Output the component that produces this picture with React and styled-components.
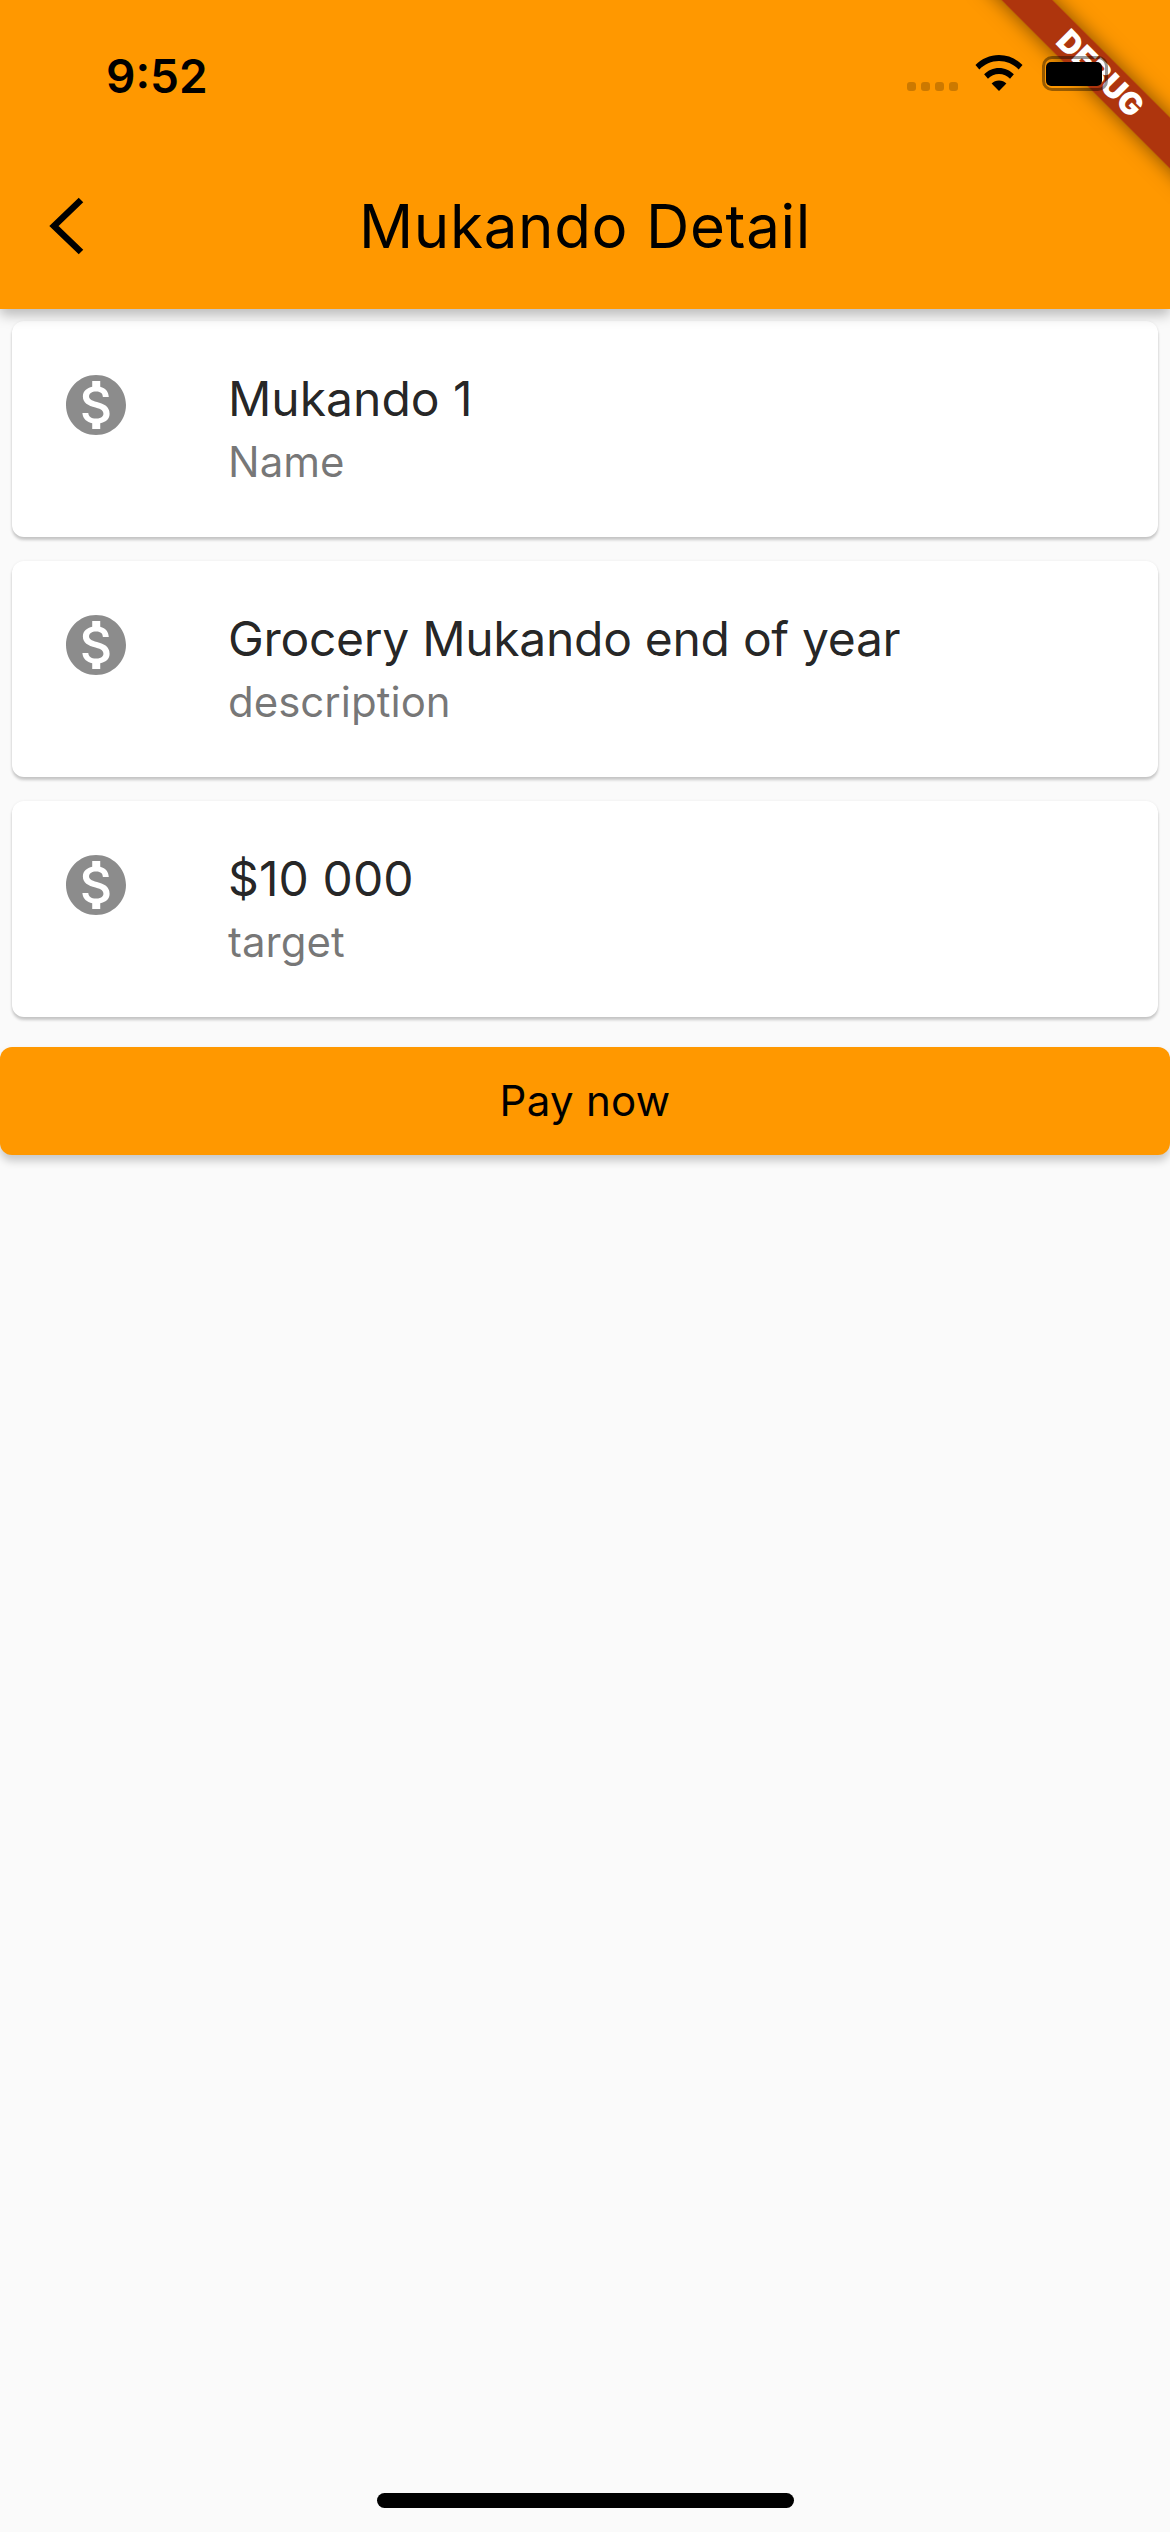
import React from 'react';
import styled, { createGlobalStyle } from 'styled-components';

const Global = createGlobalStyle`
  html, body { margin: 0; padding: 0; background: #fafafa; }
  * { box-sizing: border-box; }
`;

const Screen = styled.div`
  position: relative;
  width: 1170px;
  height: 2532px;
  overflow: hidden;
  background: #fafafa;
  font-family: Inter, "Liberation Sans", sans-serif;
`;

const AppBar = styled.header`
  position: relative;
  height: 309px;
  background: #ff9800;
  box-shadow: 0 6px 12px rgba(0, 0, 0, 0.26);
  z-index: 1;
`;

const StatusBar = styled.div`
  position: relative;
  z-index: 3;
  height: 132px;
  display: flex;
  align-items: flex-start;
  justify-content: space-between;
  padding: 52px 62px 0 106px;
`;

const Clock = styled.span`
  font-size: 46px;
  line-height: 48px;
  font-weight: 600;
  color: #000;
`;

const StatusIcons = styled.div`
  display: flex;
  align-items: flex-start;
  gap: 17px;
`;

const Dots = styled.div`
  display: flex;
  gap: 5px;
  margin-top: 30px;
`;

const Dot = styled.i`
  width: 9px;
  height: 9px;
  border-radius: 3px;
  background: rgba(0, 0, 0, 0.2);
`;

const WifiIcon = styled.svg`
  width: 48px;
  height: 36px;
  margin-top: 3px;
`;

const Battery = styled.div`
  width: 66px;
  height: 35px;
  margin: 4px 0 0 2px;
  padding: 3px 3px 2px 1px;
  border: 3px solid rgba(0, 0, 0, 0.4);
  border-radius: 10px;
`;

const BatteryFill = styled.div`
  width: 100%;
  height: 100%;
  border-radius: 5px;
  background: #000;
`;

const Toolbar = styled.div`
  height: 177px;
  padding-top: 10px;
  display: grid;
  grid-template-columns: 1fr auto 1fr;
  align-items: center;
`;

const BackButton = styled.button`
  width: 36px;
  height: 58px;
  margin-left: 48px;
  padding: 0;
  border: 0;
  background: none;
`;

const Title = styled.h1`
  margin: 0;
  font-size: 60px;
  line-height: 68px;
  font-weight: 400;
  letter-spacing: 0.7px;
  color: #000;
`;

const Banner = styled.div`
  position: absolute;
  left: 949px;
  top: 54px;
  width: 300px;
  height: 36px;
  padding-left: 4px;
  transform: rotate(45deg);
  background: rgba(130, 0, 20, 0.65);
  box-shadow: 0 0 20px rgba(0, 0, 0, 0.5);
  color: #fff;
  font-size: 31px;
  line-height: 36px;
  font-weight: 900;
  text-align: center;
  z-index: 2;
`;

const List = styled.main`
  padding: 12px 12px 0;
  display: flex;
  flex-direction: column;
  gap: 24px;
`;

const Card = styled.section`
  height: 216px;
  padding: 48px 48px 0;
  display: flex;
  align-items: flex-start;
  gap: 96px;
  background: #fff;
  border-radius: 12px;
  box-shadow: 0 3px 3px rgba(0, 0, 0, 0.2), 0 0 3px rgba(0, 0, 0, 0.06);
`;

const CoinIcon = styled.svg`
  flex: none;
  width: 72px;
  height: 72px;
  fill: rgba(0, 0, 0, 0.45);
`;

const CardText = styled.div`
  display: flex;
  flex-direction: column;
  margin-top: -3px;
`;

const Primary = styled.span`
  font-size: 48px;
  line-height: 66px;
  letter-spacing: ${(p) => p.$spacing}px;
  color: rgba(0, 0, 0, 0.87);
`;

const Secondary = styled.span`
  font-size: 42px;
  line-height: 59px;
  color: rgba(0, 0, 0, 0.54);
`;

const PayButton = styled.button`
  display: block;
  width: 1170px;
  height: 108px;
  margin: 6px 0 0 -12px;
  padding: 0 0 2px;
  border: 0;
  border-radius: 12px;
  background: #ff9800;
  box-shadow: 0 6px 9px rgba(0, 0, 0, 0.2);
  font-family: inherit;
  font-size: 42px;
  font-weight: 400;
  letter-spacing: 0.3px;
  color: #000;
`;

const HomeIndicator = styled.div`
  position: absolute;
  left: 377px;
  top: 2493px;
  width: 417px;
  height: 15px;
  border-radius: 8px;
  background: #000;
`;

const rows = [
  { primary: 'Mukando 1', secondary: 'Name', spacing: 0 },
  { primary: 'Grocery Mukando end of year', secondary: 'description', spacing: -0.3 },
  { primary: '$10 000', secondary: 'target', spacing: 0.1 },
];

export default function App() {
  return (
    <Screen>
      <Global />
      <AppBar>
        <Banner>DEBUG</Banner>
        <StatusBar>
          <Clock>9:52</Clock>
          <StatusIcons>
            <Dots><Dot /><Dot /><Dot /><Dot /></Dots>
            <WifiIcon viewBox="0 0 50 36" preserveAspectRatio="none">
              <path d="M25 0C15.500 0 7 3.800 .5 10L4.500 14.500C10 9.200 17 6 25 6s15 3.200 20.500 8.500L49.500 10C43 3.800 34.500 0 25 0z" />
              <path d="M25 13c-6 0-11.500 2.400-15.500 6.300l4 4.500c3-2.900 7-4.800 11.500-4.800s8.500 1.900 11.500 4.800l4-4.500C36.500 15.400 31 13 25 13z" />
              <path d="M25 25.500c-3 0-5.700 1.100-7.700 3L25 36l7.700-7.500c-2-1.900-4.700-3-7.700-3z" />
            </WifiIcon>
            <Battery><BatteryFill /></Battery>
          </StatusIcons>
        </StatusBar>
        <Toolbar>
          <BackButton aria-label="Back">
            <svg width="36" height="58" viewBox="0 0 36 58">
              <path d="M33 3 6 29l27 26" fill="none" stroke="#000" strokeWidth="6.500" />
            </svg>
          </BackButton>
          <Title>Mukando Detail</Title>
        </Toolbar>
      </AppBar>
      <List>
        {rows.map(({ primary, secondary, spacing }) => (
          <Card key={secondary}>
            <CoinIcon viewBox="0 0 24 24">
              <path d="M12 2C6.480 2 2 6.480 2 12s4.480 10 10 10 10-4.480 10-10S17.520 2 12 2zm1.410 16.090V20h-2.670v-1.930c-1.710-.36-3.160-1.460-3.270-3.400h1.960c.1 1.050.82 1.870 2.650 1.870 1.960 0 2.400-.98 2.400-1.590 0-.83-.44-1.610-2.670-2.140-2.480-.6-4.180-1.620-4.180-3.670 0-1.720 1.390-2.840 3.110-3.210V4h2.670v1.950c1.860.45 2.790 1.860 2.850 3.390H14.300c-.05-1.110-.64-1.870-2.220-1.870-1.500 0-2.400.68-2.400 1.640 0 .84.65 1.390 2.670 1.910s4.180 1.390 4.180 3.910c-.01 1.830-1.380 2.830-3.120 3.160z" />
            </CoinIcon>
            <CardText>
              <Primary $spacing={spacing}>{primary}</Primary>
              <Secondary>{secondary}</Secondary>
            </CardText>
          </Card>
        ))}
        <PayButton>Pay now</PayButton>
      </List>
      <HomeIndicator />
    </Screen>
  );
}
